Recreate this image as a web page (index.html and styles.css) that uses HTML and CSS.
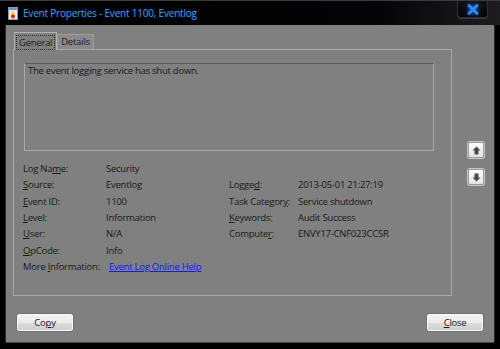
FILE: index.html
```html
<!DOCTYPE html>
<html lang="en">
<head>
  <meta charset="UTF-8">
  <title>Event Properties - Event 1100, Eventlog</title>
  <link rel="stylesheet" href="styles.css">
</head>
<body>
<div class="window">
  <div class="titlebar">
    <svg class="app-icon" width="10" height="13" viewBox="0 0 10 13">
      <rect x="0.5" y="0.5" width="9" height="12" fill="#e8e8e8" stroke="#8a9ab0"/>
      <rect x="1" y="1" width="8" height="2" fill="#6f94c8"/>
      <path d="M5 4 L8 9.5 L2 9.5 Z" fill="#f2c530"/>
      <circle cx="5" cy="9.5" r="2" fill="#d8302a"/>
    </svg>
    <span class="title">Event Properties - Event 1100, Eventlog</span>
    <button class="win-close">
      <svg width="12" height="11" viewBox="0 0 12 11">
        <path d="M2 1.5 L10 9.5 M10 1.5 L2 9.5" stroke="#2f8bff" stroke-width="2.6" stroke-linecap="round"/>
      </svg>
    </button>
  </div>

  <div class="client">
    <div class="main">
      <div class="tabs-area">
        <div class="tabs">
          <span class="tab active"><span class="focus">General</span></span>
          <span class="tab">Details</span>
        </div>
        <div class="panel">
          <div class="message">The event logging service has shut down.</div>
          <div class="fields">
            <span>Log Na<u>m</u>e:</span><span>Security</span><span></span><span></span>
            <span><u>S</u>ource:</span><span>Eventlog</span><span>Logge<u>d</u>:</span><span>2013-05-01 21:27:19</span>
            <span><u>E</u>vent ID:</span><span>1100</span><span>Task Categor<u>y</u>:</span><span>Service shutdown</span>
            <span><u>L</u>evel:</span><span>Information</span><span><u>K</u>eywords:</span><span>Audit Success</span>
            <span><u>U</u>ser:</span><span>N/A</span><span>Compute<u>r</u>:</span><span>ENVY17-CNF023CC5R</span>
            <span><u>O</u>pCode:</span><span>Info</span><span></span><span></span>
            <span>More <u>I</u>nformation:</span><span class="wide"><a class="link" href="#">Event Log Online Help</a></span>
          </div>
        </div>
      </div>
      <div class="nav">
        <button class="arrow">
          <svg width="9" height="9" viewBox="0 0 9 9"><path d="M4.5 0.5 L8.5 4.5 L6.5 4.5 L6.5 8.5 L2.5 8.5 L2.5 4.5 L0.5 4.5 Z" fill="#4a4a4a"/></svg>
        </button>
        <button class="arrow">
          <svg width="9" height="9" viewBox="0 0 9 9"><path d="M4.5 8.5 L8.5 4.5 L6.5 4.5 L6.5 0.5 L2.5 0.5 L2.5 4.5 L0.5 4.5 Z" fill="#4a4a4a"/></svg>
        </button>
      </div>
    </div>

    <div class="buttons">
      <button class="btn">Co<u>p</u>y</button>
      <button class="btn"><u>C</u>lose</button>
    </div>
  </div>
</div>
</body>
</html>
```

FILE: styles.css
```css
* {
  box-sizing: border-box;
}
body {
  margin: 0;
  background: #000;
  font-family: "Open Sans", "Noto Sans", sans-serif;
  font-size: 9.5px;
  letter-spacing: -0.25px;
  color: #1a1a1a;
}
.window {
  width: 500px;
  height: 349px;
  display: flex;
  flex-direction: column;
  background: #000;
}
.titlebar {
  height: 25px;
  display: flex;
  align-items: center;
  padding-left: 8px;
  border-top: 1px solid #3c3c3c;
  background: linear-gradient(to right, #000 0%, #040406 75%, #1d1d1f 100%);
}
.app-icon {
  margin-right: 5px;
}
.title {
  color: #3f98ea;
  font-size: 10px;
  letter-spacing: -0.2px;
  text-shadow: 0 0 3px rgba(60, 140, 230, 0.35);
}
.win-close {
  margin-left: auto;
  margin-right: 12px;
  align-self: flex-start;
  width: 31px;
  height: 17px;
  padding: 0;
  display: flex;
  align-items: center;
  justify-content: center;
  background: linear-gradient(to bottom, #101012, #050507);
  border: 1px solid #2e2e30;
  border-top: none;
  border-radius: 0 0 4px 4px;
  box-shadow: 0 1px 0 #3a3a3a;
}
.win-close svg {
  filter: drop-shadow(0 0 2px #2a80ff);
}
.client {
  flex: 1;
  margin: 0 6px 7px;
  padding-top: 7px;
  background: #808080;
  box-shadow: 0 1px 0 #4a4a4a, -1px 0 0 #2a2a2a, 1px 0 0 #2a2a2a;
}
.main {
  display: flex;
  margin-left: 7px;
}
.tabs-area {
  width: 439px;
}
.tabs {
  display: flex;
  align-items: flex-end;
  height: 17px;
  padding-left: 1px;
}
.tab {
  height: 15px;
  padding: 0 3px;
  line-height: 14px;
  border: 1px solid #9c9c9c;
  border-bottom: none;
  background: #8a8a8a;
}
.tab.active {
  height: 18px;
  margin-bottom: -1px;
  padding: 2px 1px 0;
  position: relative;
  background: #808080;
  border-color: #b2b2b2;
}
.focus {
  display: block;
  padding: 0 2px;
  line-height: 13px;
  border: 1px dotted #2c2c2c;
}
.panel {
  height: 247px;
  border: 1px solid #a8a8a8;
  padding: 13px 0 0 10px;
}
.message {
  width: 410px;
  height: 88px;
  border: 1px solid #a9a9a9;
  border-top-color: #5c5c5c;
  padding: 0 3px;
  line-height: 14px;
}
.fields {
  display: grid;
  grid-template-columns: 83px 123px 69px 1fr;
  grid-auto-rows: 16.33px;
  line-height: 16.33px;
  margin: 10px 0 0 -1px;
  white-space: nowrap;
}
.fields .wide {
  grid-column: span 3;
  padding-left: 3px;
}
.link {
  color: #0a1ef0;
}
.nav {
  display: flex;
  flex-direction: column;
  gap: 11px;
  margin: 110px 0 0 16px;
}
.arrow {
  width: 16px;
  height: 16px;
  padding: 0;
  display: flex;
  align-items: center;
  justify-content: center;
  background: linear-gradient(to bottom, #fdfdfd, #e4e4e4);
  border: 1px solid #9a9a9a;
  border-radius: 2px;
  box-shadow: 0 0 0 1px #c8c8c8;
}
.buttons {
  display: flex;
  justify-content: space-between;
  margin: 17px 10px 0;
}
.btn {
  width: 58px;
  height: 19px;
  padding: 0;
  font-family: inherit;
  font-size: 9.5px;
  letter-spacing: -0.25px;
  color: #1a1a1a;
  background: linear-gradient(to bottom, #f3f3f3 0%, #ebebeb 50%, #dcdcdc 51%, #cfcfcf 100%);
  border: 1px solid #707070;
  border-radius: 3px;
  box-shadow: inset 0 0 0 1px #fafafa;
}
```
